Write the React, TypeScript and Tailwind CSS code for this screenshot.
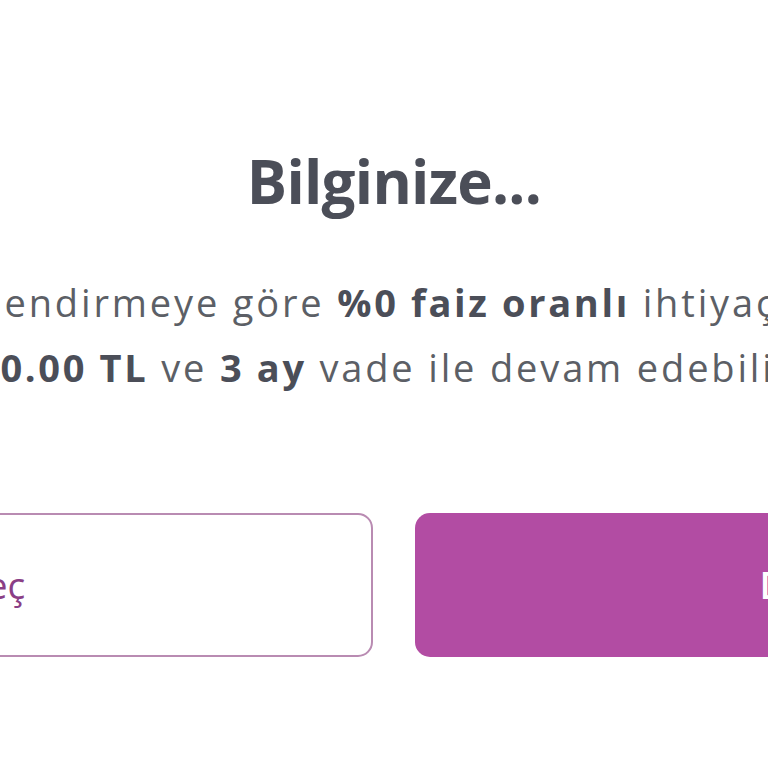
export default function App() {
  return (
    <div className="w-full h-[768px] bg-white overflow-hidden font-['Open_Sans',sans-serif]">
      <div className="flex justify-center pl-[20px] pt-[151px]">
        <div className="flex flex-col items-center shrink-0 w-[1670px]">
          <h2 className="text-[60px] leading-none font-bold tracking-[-0.012em] text-[#4b4e58]">
            Bilginize...
          </h2>

          <p className="mt-[59px] text-center text-[38px] leading-[65px] tracking-[0.075em] text-[#5c5f66] whitespace-nowrap">
            Yeni değerlendirmeye göre <b className="font-bold tracking-[0.07em] text-[#4b4e58]">%0 faiz oranlı</b> ihtiyaç kredisi için
            <br />
            <b className="font-bold tracking-[0.07em] text-[#4b4e58]">10.000.00 TL</b> ve <b className="font-bold tracking-[0.07em] text-[#4b4e58]">3 ay</b> vade ile devam edebilirsiniz.
          </p>

          <div className="mt-[113px] flex gap-[42px]">
            <button className="w-[814px] h-[144px] rounded-[15px] border-2 border-[#b98bb2] bg-white text-[37px] text-[#8a3f86]">
              Vazgeç
            </button>
            <button className="w-[814px] h-[144px] rounded-[15px] bg-[#b24ca3] text-[37px] font-semibold text-white">
              Devam
            </button>
          </div>
        </div>
      </div>
    </div>
  );
}
